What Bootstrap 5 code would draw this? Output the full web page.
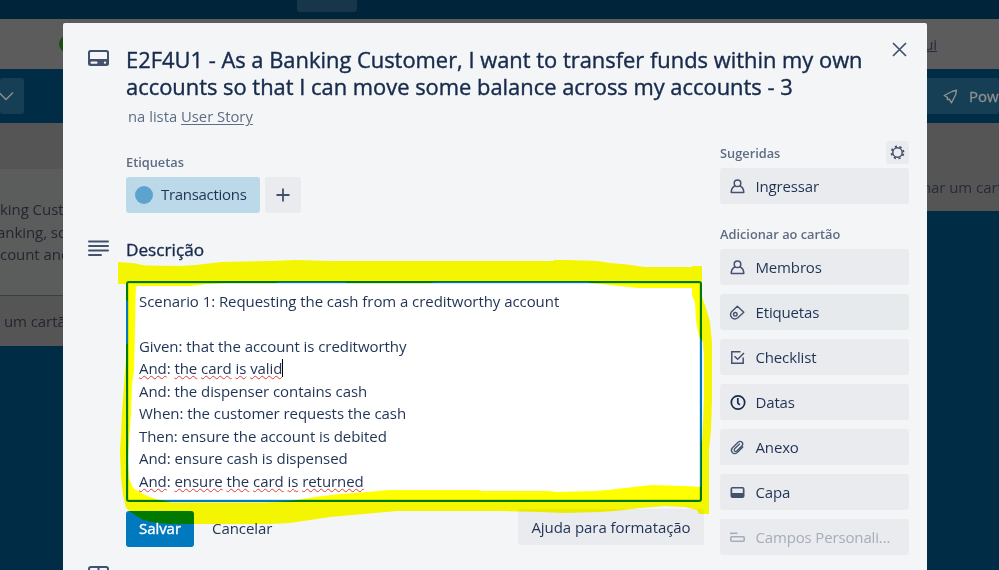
<!DOCTYPE html>
<html lang="pt-BR">
<head>
<meta charset="utf-8">
<meta name="viewport" content="width=device-width, initial-scale=1">
<title>Cartão</title>
<link href="https://cdn.jsdelivr.net/npm/bootstrap@5.3.0/dist/css/bootstrap.min.css" rel="stylesheet">
<style>
html,body{height:570px;overflow:hidden}
body{font-family:"Open Sans","Noto Sans",sans-serif;font-size:15px;line-height:22.5px;letter-spacing:-.06px;color:#1f3354;background:#002c45}
svg{display:block;flex:none}
.stage{width:999px;height:570px}
.topnav{height:19px;background:#002439}
.topnav-btn{width:60px;height:12px;margin-left:297px;background:#17364a;border-radius:0 0 3px 3px}
.notice{height:50px;background:#5c5c5c;color:#252c3a}
.dot{width:18px;height:18px;border-radius:50%;background:#1c4d14;margin-left:59px}
.boardbar{height:54px}
.bar-btn{height:36px;background:#163f56;color:#8f9090;border-radius:3px;white-space:nowrap}
.lists{height:223px}
.list-left{width:160px;height:223px;background:#555556;color:#22272f;white-space:nowrap}
.list-card{height:127px;background:#5b5c5c;border-bottom:1px solid #3c3d3f;padding-top:29px}
.list-right{width:160px;height:88px;background:#555556;color:#262b34;white-space:nowrap}
.dialog{left:63px;top:23px;width:864px;height:547px;background:#f4f5f7;border-radius:2px 2px 0 0;overflow:hidden}
.main-col{width:641px;padding:26px 0 0 25px}
.icon-col{width:38px;flex:none;color:#42526e}
.card-title-text{font-size:21.9px;line-height:27px;font-weight:400;letter-spacing:0;margin:-3px 0 0;white-space:nowrap;color:#172b4d;-webkit-text-stroke:.4px #172b4d}
.sub{color:#5e6c84;font-size:14.8px;letter-spacing:0}
.sub u{text-underline-offset:2px}
.minihead{font-size:12.8px;letter-spacing:0;font-weight:600;color:#5e6c84;line-height:22px;white-space:nowrap}
.label-chip{height:36px;width:134px;background:#bcd9ea;border-radius:3px;padding-left:9px;letter-spacing:-.3px}
.label-dot{width:18px;height:18px;border-radius:50%;background:#5ba4cf;margin-right:8px}
.soft{background:#eaebef;border-radius:3px}
.plus{width:36px;height:36px;margin-left:5px}
.sect{font-size:17.2px;line-height:24px;letter-spacing:0;color:#172b4d;-webkit-text-stroke:.35px #172b4d}
.editor{width:576px;height:221px;border:2px solid #0079bf;border-radius:3px;background:#fff;padding:7px 11px;box-shadow:inset 0 0 0 1px #d5e9f4;white-space:nowrap}
.editor div{height:22.5px}
.sp{text-decoration:underline wavy #e53935 1px;text-underline-offset:1px;text-decoration-skip-ink:none}
.caret{display:inline-block;width:1px;height:18px;background:#000;vertical-align:-3px}
.save{width:68px;height:36px;background:#0079bf;color:#fff;border-radius:3px;-webkit-text-stroke:.35px #fff}
.help{width:186px;height:36px;margin-left:auto}
.side-col{width:189px;margin-left:16px;padding-top:118px}
.side-btn{height:36px;margin-bottom:9px;padding-left:9px;white-space:nowrap;letter-spacing:-.15px}
.side-btn svg{margin-right:9.5px;color:#42526e}
.side-btn.off,.side-btn.off svg{color:#a5adba}
.gear{width:23px;height:23px}
.closer{right:20px;top:19px;color:#42526e}
.marker{left:0;top:0;mix-blend-mode:multiply;pointer-events:none}
</style>
</head>
<body>
<div class="stage position-relative overflow-hidden">
  <div class="topnav"><div class="topnav-btn"></div></div>
  <div class="notice d-flex align-items-center justify-content-between">
    <div class="dot"></div>
    <u style="margin-right:62px">aqui</u>
  </div>
  <div class="boardbar d-flex align-items-center justify-content-between">
    <div class="bar-btn d-flex align-items-center" style="width:24px">
      <svg width="16" height="12" viewBox="0 0 16 12" fill="none" stroke="currentColor" stroke-width="1.4"><path d="M-1 2.500L6 9.500L13 2.500"/></svg>
    </div>
    <div class="bar-btn d-flex align-items-center overflow-hidden" style="width:89px;padding-left:33px">
      <svg width="15" height="15" viewBox="0 0 15 15" fill="none" stroke="currentColor" stroke-width="1.4" stroke-linejoin="round"><path d="M13.500 1.300L9 2.500L1.200 6.500L4.500 8.300L4.300 10.500L6.500 10.300L8.500 13.800L12.500 6Z"/></svg>
      <span style="margin-left:11px;-webkit-text-stroke:.3px #8f9090">Power-Ups</span>
    </div>
  </div>
  <div class="lists d-flex justify-content-between align-items-start">
    <div class="list-left">
      <div style="height:46px"></div>
      <div class="list-card"><div>king Customer</div><div style="margin-left:-3px">anking, so that</div><div>count and</div></div>
      <div style="padding:14px 0 0 0;margin-left:-6px">r um cartão</div>
    </div>
    <div class="list-right d-flex align-items-end justify-content-end overflow-hidden"><div style="padding-bottom:13px;margin-right:-21px">Adicionar um cartão</div></div>
  </div>

  <div class="dialog position-absolute d-flex align-items-start">
    <div class="main-col">
      <div class="d-flex">
        <div class="icon-col"><svg width="21" height="17" viewBox="0 0 21 17"><path fill="currentColor" fill-rule="evenodd" d="M2.500 1H18.500Q21 1 21 3.500V14.500Q21 17 18.500 17H2.500Q0 17 0 14.500V3.500Q0 1 2.500 1ZM3 3Q2 3 2 4V10H19V4Q19 3 18 3ZM3.500 12.500Q2.500 12.500 2.500 13.700Q2.500 14.800 3.500 14.800H8.500Q9.500 14.800 9.500 13.700Q9.500 12.500 8.500 12.500ZM17 12.400A1.200 1.200 0 1 0 17 14.800A1.200 1.200 0 1 0 17 12.400Z"/></svg></div>
        <div>
          <h2 class="card-title-text">E2F4U1 - As a Banking Customer, I want to transfer funds within my own<br>accounts so that I can move some balance across my accounts - 3</h2>
          <div class="sub" style="margin:5px 0 0 2px">na lista <u>User Story</u></div>
        </div>
      </div>
      <div style="margin:23px 0 0 38px">
        <div class="minihead">Etiquetas</div>
        <div class="d-flex" style="margin-top:4px">
          <div class="label-chip d-flex align-items-center"><span class="label-dot"></span>Transactions</div>
          <div class="soft plus d-flex align-items-center justify-content-center"><svg width="14" height="14" viewBox="0 0 14 14" stroke="#42526e" stroke-width="1.800"><path d="M7 .5V13.500M.5 7H13.500"/></svg></div>
        </div>
      </div>
      <div class="d-flex align-items-start" style="margin-top:25px">
        <div class="icon-col" style="padding-top:2px"><svg width="21" height="17" viewBox="0 0 21 17" stroke="currentColor" stroke-width="2" stroke-linecap="round"><path d="M1 1.500H20M1 6H20M1 10.500H20M1 15H13"/></svg></div>
        <div class="sect">Descrição</div>
      </div>
      <div style="margin:19px 0 0 38px">
        <div class="editor">
          <div>Scenario 1: Requesting the cash from a creditworthy account</div>
          <div></div>
          <div>Given: that the account is creditworthy</div>
          <div><span class="sp">And</span>: <span class="sp">the</span> <span class="sp">card</span> <span class="sp">is</span> <span class="sp">valid</span><span class="caret"></span></div>
          <div>And: the dispenser contains cash</div>
          <div>When: the customer requests the cash</div>
          <div>Then: ensure the account is debited</div>
          <div>And: ensure cash is dispensed</div>
          <div><span class="sp">And</span>: <span class="sp">ensure</span> <span class="sp">the</span> <span class="sp">card</span> <span class="sp">is</span> <span class="sp">returned</span></div>
        </div>
        <div class="d-flex" style="margin-top:9px">
          <div class="save d-flex align-items-center justify-content-center">Salvar</div>
          <div class="d-flex align-items-center" style="margin-left:18px">Cancelar</div>
          <div class="soft help d-flex align-items-center justify-content-center" style="margin-top:-2px;padding-top:1px">Ajuda para formatação</div>
        </div>
      </div>
      <div class="icon-col" style="margin-top:19px"><svg width="21" height="17" viewBox="0 0 21 17" fill="none" stroke="currentColor" stroke-width="2"><path d="M1 17V3Q1 1 3 1H18Q20 1 20 3V17M10.500 1V17M1 6H20"/></svg></div>
    </div>
    <div class="side-col">
      <div class="d-flex align-items-center justify-content-between" style="margin-bottom:4px">
        <div class="minihead">Sugeridas</div>
        <div class="soft gear d-flex align-items-center justify-content-center"><svg width="15" height="15" viewBox="0 0 15 15" fill="none" stroke="#42526e"><circle cx="7.500" cy="7.500" r="4.700" stroke-width="1.500"/><circle cx="7.500" cy="7.500" r="6" stroke-width="1.800" stroke-dasharray="2.200 2.512" stroke-dashoffset="-1.300"/></svg></div>
      </div>
      <div class="soft side-btn d-flex align-items-center" style="margin-bottom:19px"><svg width="17" height="17" viewBox="0 0 17 17" fill="none" stroke="currentColor" stroke-width="1.500"><circle cx="8.500" cy="5.200" r="3.300"/><path d="M6.200 7.800Q2.300 9.500 2.200 14.600H14.800Q14.700 9.500 10.800 7.800" stroke-linejoin="round"/></svg>Ingressar</div>
      <div class="minihead" style="margin-bottom:4px">Adicionar ao cartão</div>
      <div class="soft side-btn d-flex align-items-center"><svg width="17" height="17" viewBox="0 0 17 17" fill="none" stroke="currentColor" stroke-width="1.500"><circle cx="8.500" cy="5.200" r="3.300"/><path d="M6.200 7.800Q2.300 9.500 2.200 14.600H14.800Q14.700 9.500 10.800 7.800" stroke-linejoin="round"/></svg>Membros</div>
      <div class="soft side-btn d-flex align-items-center" style="background:#e6eaed"><svg width="17" height="17" viewBox="0 0 17 17" fill="none" stroke="currentColor" stroke-width="1.400" stroke-linejoin="round"><path d="M8.300 2.200L14.800 8.300L8.600 14Q5.500 16 2.900 13.700Q.4 11 2.400 8.100Z"/><circle cx="6.300" cy="10.300" r="1.800"/></svg>Etiquetas</div>
      <div class="soft side-btn d-flex align-items-center"><svg width="17" height="17" viewBox="0 0 17 17" fill="none" stroke="currentColor" stroke-width="1.500"><path d="M11.500 2.800H2.800V14.200H14.200V8.500M5.500 7.200L8.700 10.300L15 4"/></svg>Checklist</div>
      <div class="soft side-btn d-flex align-items-center"><svg width="17" height="17" viewBox="0 0 17 17" fill="none" stroke="#172b4d" stroke-width="1.700"><circle cx="9" cy="8.500" r="6.700"/><path d="M8.800 4V8.800L10.800 11"/></svg>Datas</div>
      <div class="soft side-btn d-flex align-items-center"><svg width="17" height="17" viewBox="0 0 17 17" fill="none" stroke="currentColor" stroke-width="1.300" stroke-linecap="round"><path d="M13.800 8L8.300 13.500Q5.500 15.700 3.300 13.500Q1.200 11.200 3.500 8.800L9.300 3.100Q11.300 1.600 13 3.200Q14.600 5 13 6.800L7.700 12Q6.500 12.900 5.500 12Q4.600 11 5.600 9.800L10.500 5"/></svg>Anexo</div>
      <div class="soft side-btn d-flex align-items-center"><svg width="17" height="17" viewBox="0 0 17 17"><path fill="currentColor" fill-rule="evenodd" d="M3.500 3H13.500Q15.500 3 15.500 5V12Q15.500 14 13.500 14H3.500Q1.500 14 1.500 12V5Q1.500 3 3.500 3ZM3.200 4.500V9H13.800V4.500Z"/></svg>Capa</div>
      <div class="soft side-btn off d-flex align-items-center"><svg width="17" height="17" viewBox="0 0 17 17" fill="none" stroke="currentColor" stroke-width="1.600"><path d="M1 4.300H8.500"/><rect x="1.800" y="7.800" width="13.400" height="4.400" rx="1"/></svg>Campos Personali...</div>
      <div class="minihead" style="margin-top:3px;color:#8a94a5">Adicionar</div>
    </div>
    <svg class="closer position-absolute" width="15" height="15" viewBox="0 0 15 15" stroke="currentColor" stroke-width="1.700"><path d="M1 1L14 14M14 1L1 14"/></svg>
  </div>

  <!-- highlighter stroke round the editor -->
  <svg class="marker position-absolute" width="999" height="570" viewBox="0 0 999 570"><path fill="#ff0" fill-rule="evenodd" d="M118 262L133 263L145 265.500L180 266L195 265L222 262L270 261L296 260L330 261L553 261L554 260L567 260L597 261L610 263L627 264.500L645 267L692 267V266H702V297L706 308L710 322L712 343V400L711 430L709 450V514H699L697 510L685 507L665 506L640 508L615 511L600 512L564 513L540 512L500 511L397 511L375 513L330 517L310 520L290 523L270 524H170L157 523L143 520L132 513L126 508L123 495L121 478L120 450L121 435L122 412L124 385L126 358L126 345L128 343V301L126 300V284H118ZM136 286H190L207 284L230 283L276 283L278 282H345L347 283H430L435 282H588L590 283L602 284L618 286L638 288H692V295L695 303L696 320L698 332L700 338L703 342L704 355V400L703 425L702 440L701 442V487L685 486L652 485L625 488L608 490L594 491L556 492L548 491H481L480 490H389L367 492L340 494L315 497L303 499L290 501L265 502.500H172L155 499L143 494L133 488L129 478L128 460L129 440L131 415L132 385L134 370L135 330L135.500 300Z"/></svg>
</div>
</body>
</html>
